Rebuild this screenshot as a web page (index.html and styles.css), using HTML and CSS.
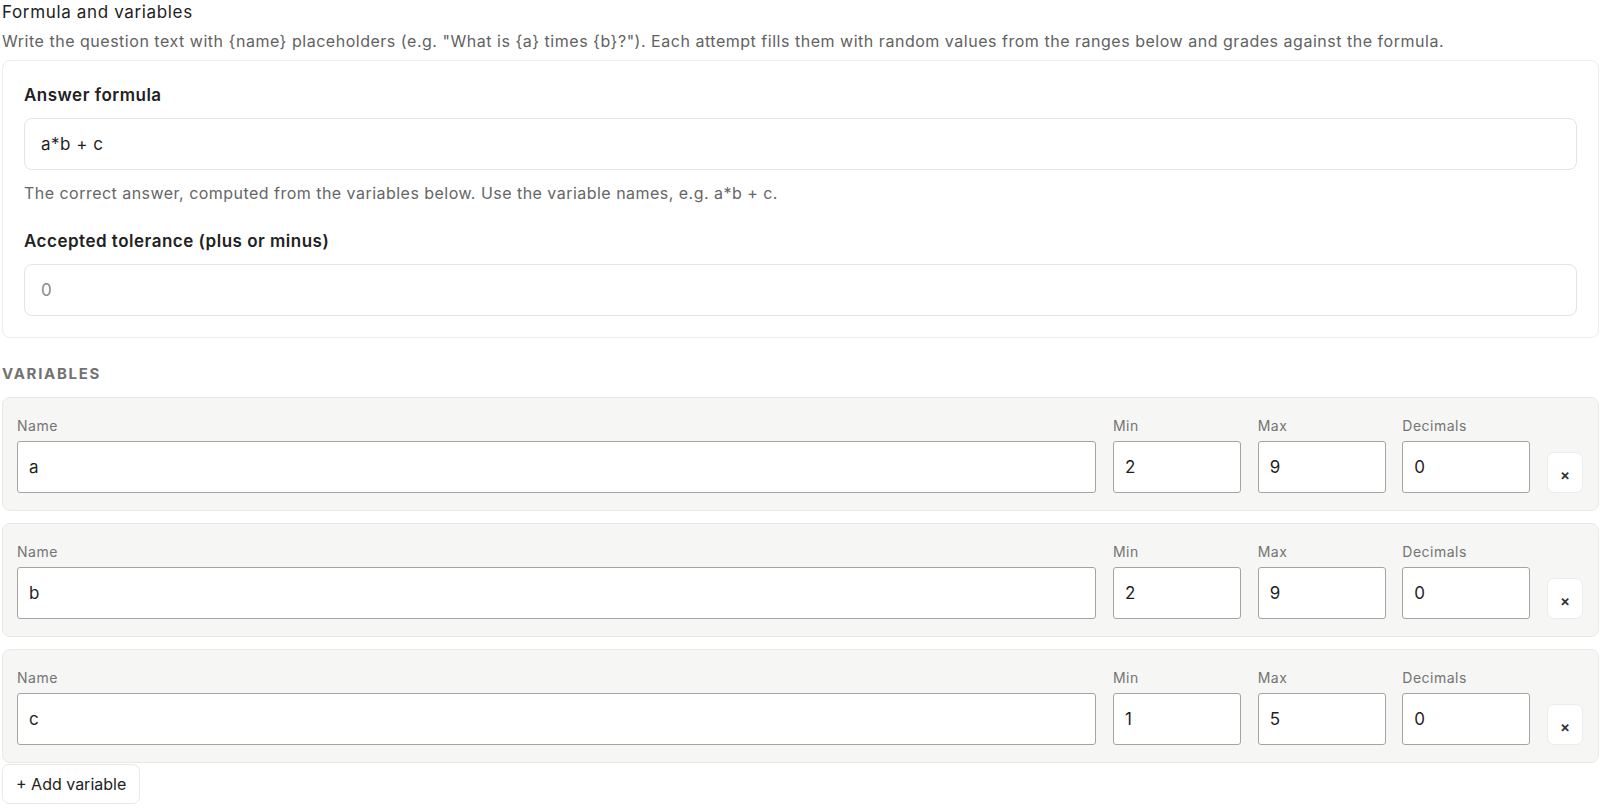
FILE: index.html
```html
<!DOCTYPE html>
<html lang="en">
<head>
<meta charset="utf-8">
<title>Formula and variables</title>
<link rel="stylesheet" href="styles.css">
</head>
<body>
<div class="page">
  <h2 class="title">Formula and variables</h2>
  <p class="subtitle">Write the question text with {name} placeholders (e.g. "What is {a} times {b}?"). Each attempt fills them with random values from the ranges below and grades against the formula.</p>

  <section class="card">
    <div class="field">
      <label class="field-label">Answer formula</label>
      <input class="text-input" type="text" value="a*b + c">
      <p class="help">The correct answer, computed from the variables below. Use the variable names, e.g. a*b + c.</p>
    </div>
    <div class="field field-next">
      <label class="field-label">Accepted tolerance (plus or minus)</label>
      <input class="text-input" type="text" placeholder="0">
    </div>
  </section>

  <h3 class="section-head">VARIABLES</h3>

  <div class="var-list">
    <div class="var-row">
      <div class="var-field"><label class="var-label">Name</label><input class="var-input" type="text" value="a"></div>
      <div class="var-field"><label class="var-label">Min</label><input class="var-input" type="text" value="2"></div>
      <div class="var-field"><label class="var-label">Max</label><input class="var-input" type="text" value="9"></div>
      <div class="var-field"><label class="var-label">Decimals</label><input class="var-input" type="text" value="0"></div>
      <button class="remove-btn" type="button">×</button>
    </div>
    <div class="var-row">
      <div class="var-field"><label class="var-label">Name</label><input class="var-input" type="text" value="b"></div>
      <div class="var-field"><label class="var-label">Min</label><input class="var-input" type="text" value="2"></div>
      <div class="var-field"><label class="var-label">Max</label><input class="var-input" type="text" value="9"></div>
      <div class="var-field"><label class="var-label">Decimals</label><input class="var-input" type="text" value="0"></div>
      <button class="remove-btn" type="button">×</button>
    </div>
    <div class="var-row">
      <div class="var-field"><label class="var-label">Name</label><input class="var-input" type="text" value="c"></div>
      <div class="var-field"><label class="var-label">Min</label><input class="var-input" type="text" value="1"></div>
      <div class="var-field"><label class="var-label">Max</label><input class="var-input" type="text" value="5"></div>
      <div class="var-field"><label class="var-label">Decimals</label><input class="var-input" type="text" value="0"></div>
      <button class="remove-btn" type="button">×</button>
    </div>
  </div>

  <button class="add-btn" type="button">+ Add variable</button>
</div>
</body>
</html>
```

FILE: styles.css
```css
* { box-sizing: border-box; }

html, body {
  margin: 0;
  padding: 0;
  background: #ffffff;
}

body {
  font-family: Inter, "Liberation Sans", Arial, sans-serif;
  color: #1f1f1f;
}

.page {
  padding: 0 1px 0 2px;
}

.title {
  margin: 0;
  font-size: 17px;
  line-height: 24px;
  font-weight: 400;
  letter-spacing: 0.65px;
  color: #222222;
}

.subtitle {
  margin: 6px 0 0;
  font-size: 16px;
  line-height: 22px;
  letter-spacing: 0.52px;
  color: #626262;
}

.card {
  margin-top: 8px;
  border: 1px solid #ededed;
  border-radius: 8px;
  background: #ffffff;
  padding: 22px 21px 21px 21px;
}

.field {
  display: flex;
  flex-direction: column;
}

.field-next {
  margin-top: 25px;
}

.field-label {
  font-size: 17px;
  line-height: 24px;
  font-weight: 600;
  letter-spacing: 0.5px;
  color: #222222;
}

.text-input {
  margin-top: 11px;
  height: 52px;
  width: 100%;
  border: 1px solid #e4e4e4;
  border-radius: 8px;
  padding: 0 16px;
  font-family: inherit;
  font-size: 17px;
  letter-spacing: 0.5px;
  color: #1f1f1f;
  background: #ffffff;
  outline: none;
}

.text-input::placeholder {
  color: #8a8a8a;
}

.help {
  margin: 12px 0 0;
  font-size: 16px;
  line-height: 22px;
  letter-spacing: 0.47px;
  color: #666666;
}

.section-head {
  margin: 26px 0 13px;
  font-size: 15px;
  line-height: 20px;
  font-weight: 700;
  letter-spacing: 1.7px;
  color: #727272;
}

.var-list {
  display: flex;
  flex-direction: column;
  gap: 12px;
}

.var-row {
  display: grid;
  grid-template-columns: 1fr 128px 128px 128px 36px;
  column-gap: 16.7px;
  align-items: end;
  background: #f6f6f5;
  border: 1px solid #e9e9e8;
  border-radius: 8px;
  padding: 19px 15px 17px 14px;
}

.var-field {
  display: flex;
  flex-direction: column;
}

.var-label {
  font-size: 14px;
  line-height: 18px;
  letter-spacing: 0.5px;
  color: #747474;
}

.var-input {
  margin-top: 6px;
  height: 52px;
  width: 100%;
  border: 1px solid #a4a4a4;
  border-radius: 3px;
  padding: 0 11px;
  font-family: inherit;
  font-size: 17px;
  letter-spacing: 0.4px;
  color: #1f1f1f;
  background: #ffffff;
  outline: none;
}

.remove-btn {
  height: 41px;
  width: 36px;
  border: 1px solid #ececec;
  border-radius: 7px;
  background: #ffffff;
  font-family: inherit;
  font-size: 15px;
  font-weight: 600;
  color: #333333;
  padding: 3px 0 0;
  cursor: pointer;
}

.add-btn {
  display: block;
  margin-top: 1px;
  height: 40px;
  padding: 0 13px;
  border: 1px solid #e8e8e8;
  border-radius: 7px;
  background: #ffffff;
  font-family: inherit;
  font-size: 16px;
  color: #222222;
  cursor: pointer;
}
```
